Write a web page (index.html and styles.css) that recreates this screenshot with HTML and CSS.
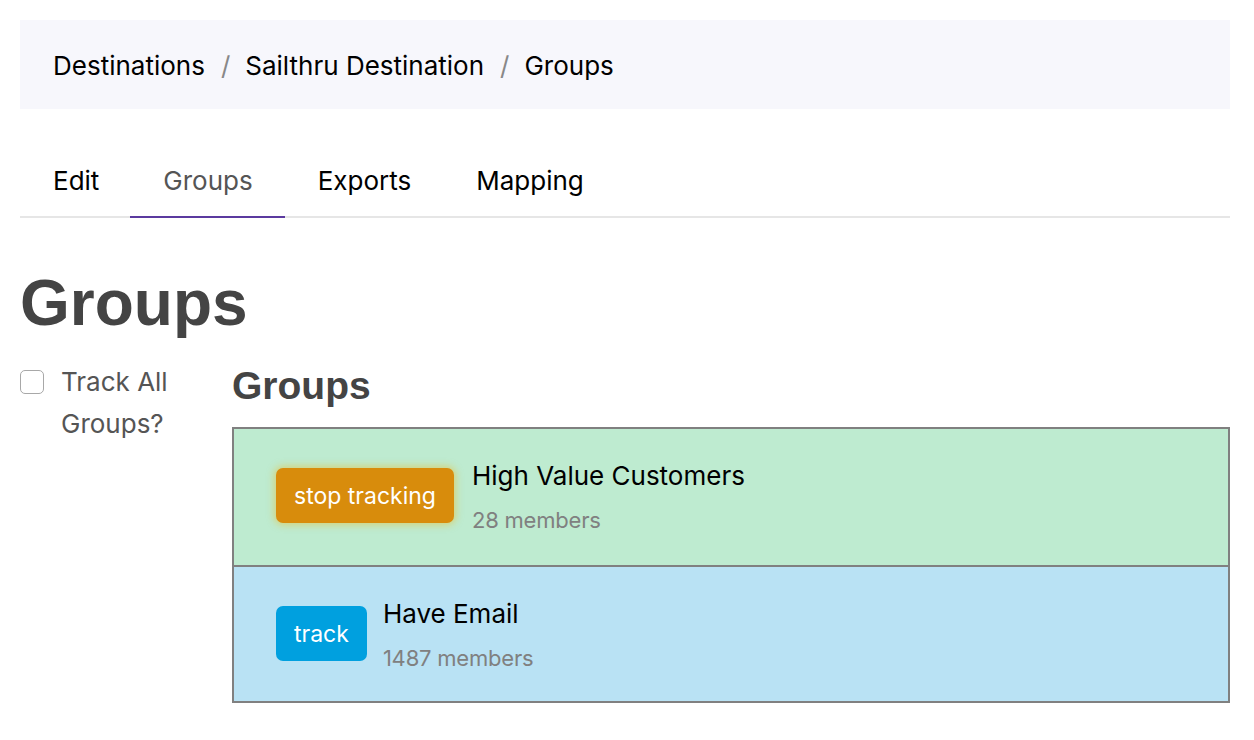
FILE: index.html
```html
<!DOCTYPE html>
<html>
<head>
<meta charset="utf-8">
<link rel="stylesheet" href="styles.css">
</head>
<body>
<nav class="breadcrumb">
  <span class="crumb">Destinations</span>
  <span class="sep">/</span>
  <span class="crumb">Sailthru Destination</span>
  <span class="sep">/</span>
  <span class="crumb">Groups</span>
</nav>
<ul class="tabs">
  <li class="tab">Edit</li>
  <li class="tab active">Groups</li>
  <li class="tab">Exports</li>
  <li class="tab">Mapping</li>
</ul>
<h1 class="title">Groups</h1>
<div class="layout">
  <aside class="side">
    <label class="check">
      <span class="box"></span>
      <span class="check-label">Track All Groups?</span>
    </label>
  </aside>
  <section class="main">
    <h2 class="subtitle">Groups</h2>
    <div class="list">
      <div class="row row-tracked">
        <button class="btn btn-stop">stop tracking</button>
        <div class="info">
          <div class="name">High Value Customers</div>
          <div class="count">28 members</div>
        </div>
      </div>
      <div class="row row-untracked">
        <button class="btn btn-track">track</button>
        <div class="info">
          <div class="name">Have Email</div>
          <div class="count">1487 members</div>
        </div>
      </div>
    </div>
  </section>
</div>
</body>
</html>
```
FILE: styles.css
```css
html, body {
  margin: 0;
  padding: 0;
  background: #fff;
}
body {
  padding: 20px 24px 0 20px;
  font-family: "Inter", "Liberation Sans", sans-serif;
  color: #000;
}
.breadcrumb {
  background: #f7f7fc;
  height: 89px;
  padding: 0 33px;
  display: flex;
  align-items: center;
  font-size: 26px;
  padding-top: 2px;
  box-sizing: border-box;
}
.sep {
  color: #888;
  padding: 0 15px 0 16px;
}
.tabs {
  list-style: none;
  margin: 37px 0 0 0;
  padding: 0;
  display: flex;
  border-bottom: 2px solid #e6e6e6;
}
.tab {
  padding: 15px 32px 16px 33px;
  font-size: 26px;
  line-height: 39px;
  margin-bottom: -2px;
  border-bottom: 2px solid transparent;
}
.tab:first-child {
  padding-right: 31px;
}
.tab.active {
  color: #555;
  border-bottom-color: #5b3a9f;
}
.title {
  margin: 48px 0 0 0;
  font-family: "Liberation Sans", Arial, sans-serif;
  font-size: 64px;
  font-weight: 700;
  line-height: 74px;
  color: #444;
}
.layout {
  display: grid;
  grid-template-columns: 212px 1fr;
  margin-top: 21px;
}
.check {
  display: flex;
  align-items: flex-start;
  gap: 17px;
}
.box {
  width: 22px;
  height: 22px;
  border: 1px solid #a8a8a8;
  border-radius: 5px;
  margin-top: 9px;
  flex: none;
  background: #fff;
}
.check-label {
  font-size: 26px;
  line-height: 42px;
  color: #555;
  width: 110px;
}
.subtitle {
  margin: 0;
  font-family: "Liberation Sans", Arial, sans-serif;
  font-size: 39px;
  font-weight: 700;
  line-height: 50px;
  color: #444;
}
.list {
  margin-top: 16px;
  border: 2px solid #808080;
}
.row {
  display: flex;
  align-items: flex-start;
  height: 136px;
  padding: 39px 42px 0 42px;
  box-sizing: border-box;
}
.row + .row {
  border-top: 2px solid #808080;
}
.row-tracked { background: #beebd0; }
.row-untracked { background: #b9e2f4; }
.btn {
  font-family: inherit;
  font-size: 23px;
  color: #fff;
  border: none;
  border-radius: 7px;
  height: 55px;
  padding: 0 18px;
}
.btn-stop {
  background: #d88c0c;
  box-shadow: 0 0 7px 2px rgba(235, 190, 40, 0.5);
  margin-right: 18px;
}
.btn-track {
  background: #00a0df;
  margin-right: 16px;
}
.info {
  display: flex;
  flex-direction: column;
  margin-top: -10px;
}
.name {
  font-size: 26px;
  line-height: 36px;
}
.count {
  font-size: 22px;
  line-height: 30px;
  color: #808080;
  margin-top: 11px;
  letter-spacing: -0.2px;
}
```
